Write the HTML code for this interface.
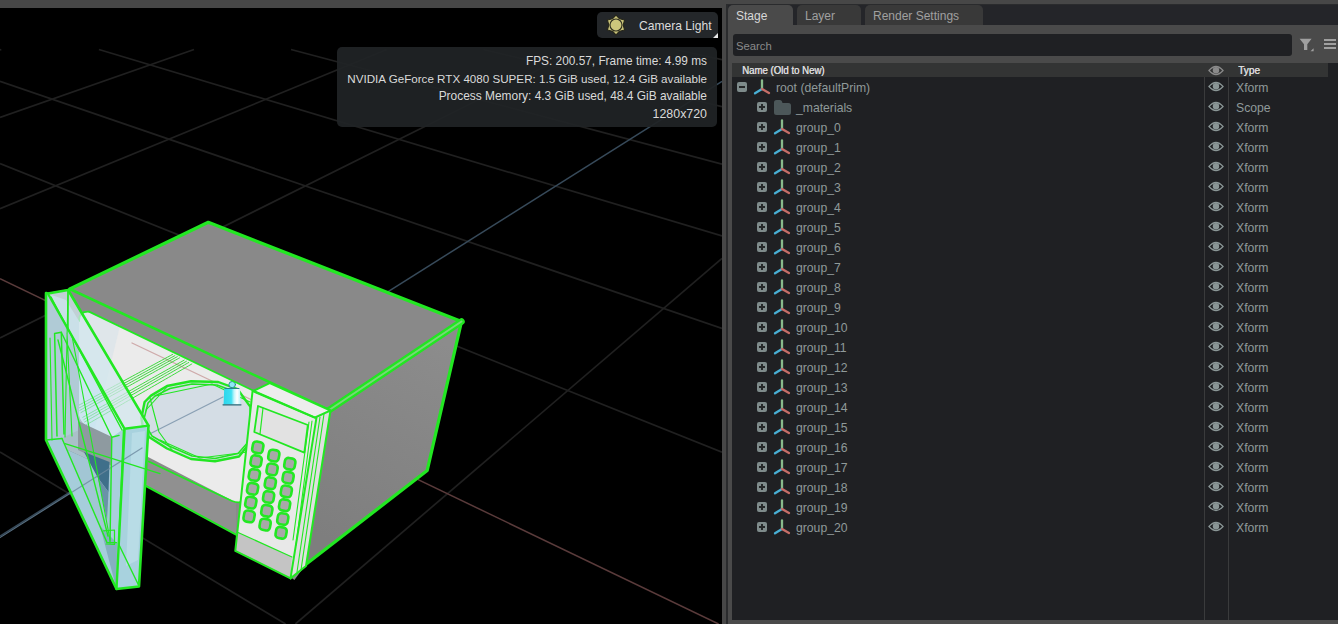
<!DOCTYPE html>
<html><head><meta charset="utf-8"><style>
*{margin:0;padding:0;box-sizing:border-box}
html,body{width:1338px;height:624px;overflow:hidden;background:#474747;font-family:"Liberation Sans",sans-serif;-webkit-font-smoothing:antialiased}
.abs{position:absolute}
#vp{position:absolute;left:0;top:8px;width:722px;height:616px;background:#000;overflow:hidden}
#vp svg.scene{position:absolute;left:0;top:-8px}
#cam{position:absolute;left:597px;top:4px;width:121px;height:26px;background:#24272a;border-radius:5px}
#cam .t{position:absolute;left:42px;top:6.5px;font-size:12.1px;color:#dcdcdc;white-space:nowrap}
#stats{position:absolute;left:337px;top:39px;width:380px;height:80px;background:rgba(32,35,38,0.93);border-radius:5px}
#stats div{position:absolute;right:10px;font-size:11.75px;color:#dadada;white-space:nowrap}
#rp{position:absolute;left:722px;top:0;width:616px;height:624px;background:#474747}
.tn,.tt{position:absolute;font-size:12.2px;color:#8f9a9a;white-space:nowrap;line-height:20px}
.ico,.eye{position:absolute}
.exp{position:absolute;width:10px;height:10px;background:#7e8b8b;border-radius:2px}
.exp .mh{position:absolute;left:2px;top:4px;width:6px;height:2px;background:#252829}
.exp .mv{position:absolute;left:4px;top:2px;width:2px;height:6px;background:#252829}
.tab{position:absolute;top:5px;height:20px;border-radius:5px 5px 0 0;font-size:12px;line-height:23px;white-space:nowrap}
</style></head><body>
<div id="vp">
<svg class="scene" width="722" height="624" viewBox="0 0 722 624">
<g><line x1="675.4" y1="49.5" x2="722.0" y2="59.6" stroke="#202020" stroke-width="1.7"/><line x1="483.2" y1="49.5" x2="722.0" y2="106.6" stroke="#202020" stroke-width="1.7"/><line x1="291.0" y1="49.5" x2="722.0" y2="164.1" stroke="#202020" stroke-width="1.7"/><line x1="98.9" y1="49.5" x2="722.0" y2="236.0" stroke="#202020" stroke-width="1.7"/><line x1="0.0" y1="81.4" x2="722.0" y2="328.5" stroke="#202020" stroke-width="1.7"/><line x1="0.0" y1="163.5" x2="722.0" y2="452.1" stroke="#202020" stroke-width="1.7"/><line x1="0.0" y1="452.1" x2="285.6" y2="624.0" stroke="#202020" stroke-width="1.7"/><line x1="1.3" y1="49.5" x2="0.0" y2="49.9" stroke="#202020" stroke-width="1.7"/><line x1="194.0" y1="49.5" x2="0.0" y2="117.5" stroke="#202020" stroke-width="1.7"/><line x1="386.8" y1="49.5" x2="0.0" y2="208.7" stroke="#202020" stroke-width="1.7"/><line x1="579.6" y1="49.5" x2="0.0" y2="338.0" stroke="#202020" stroke-width="1.7"/><line x1="722.0" y1="258.3" x2="295.4" y2="624.0" stroke="#202020" stroke-width="1.7"/></g>
<g><line x1="0.0" y1="278.7" x2="718.6" y2="624.0" stroke="#5a3b3b" stroke-width="1.5"/><line x1="722.0" y1="81.3" x2="0.0" y2="536.1" stroke="#374a5a" stroke-width="1.5"/></g>
<g id="mw" stroke-linejoin="round" stroke-linecap="round">
<!-- body -->
<polygon points="69.8,289 208.3,222.3 461.5,321.5 329.2,410" fill="#898989"/>
<defs><linearGradient id="rf" x1="440" y1="340" x2="330" y2="540" gradientUnits="userSpaceOnUse"><stop offset="0" stop-color="#8c8c8c"/><stop offset="1" stop-color="#7e7e7e"/></linearGradient></defs>
<polygon points="461.5,321.5 427.2,470.5 306,564.3 329.2,410" fill="url(#rf)"/>
<polygon points="69.8,289 329.2,410 306,564.3 294.4,580 236,534.6 146,486 46,440 46,293" fill="#8a8a8a"/>
<!-- opening -->
<path d="M79,321 Q79,311 89,311.6 L253,390.5 L248,500 Q246,503.5 236,502.6 L92,428 Q79,424 79,412 Z" fill="#ebebeb"/>
<path d="M79,321 Q79,311 89,311.6 L120,326 L95,428 Q79,424 79,412 Z" fill="#dfe6ea"/>
<!-- red axis through cavity -->
<line x1="132" y1="343" x2="252" y2="400" stroke="#c89a9a" stroke-width="1.3" opacity="0.8"/>
<!-- turntable -->
<path d="M141.4,418 L144.6,402 L151,395.6 L167,386 L191,381.2 L218.3,382 L237.6,389.2 L250.4,406.9 L252,440 L239,456.5 L215,461.3 L191,459 L167,448.5 L149.4,437.3 L143,427.7 Z" fill="#d4dde5"/>
<line x1="100" y1="459" x2="223" y2="397" stroke="#8aa0b4" stroke-width="1.3"/>
<g fill="none" stroke="#22e622" stroke-linejoin="round">
<path d="M141.4,418 L144.6,402 L151,395.6 L167,386 L191,381.2 L218.3,382 L237.6,389.2 L250.4,406.9 L252,440 L239,456.5 L215,461.3 L191,459 L167,448.5 L149.4,437.3 L143,427.7 Z" stroke-width="2.4"/>
<path d="M144.5,417 L148,403 L155,396 L170,388.5 L192,384 L217,385 L236,392" stroke-width="1.5"/>
<path d="M146,426 L152,436 L169,446 L192,456 L215,458.5 L238,453.5 L250,440" stroke-width="1.5"/>
<path d="M150,398 L159,432 L172,450 M146,410 L168,386 M155,396 L212,384 L250,402 M160,440 L200,458 L248,452" stroke-width="1.1"/>
</g>
<!-- rack lines -->
<g stroke="#2ad82a" stroke-width="0.9" fill="none" stroke-dasharray="2.5 0.8">
<path d="M78.0,405.7 L172.6,354.4 M79.0,408.0 L174.9,355.6 M79.9,410.3 L177.2,356.7 M80.9,412.6 L179.5,357.9 M82.8,417.3 L184.1,360.2 M83.8,419.6 L186.4,361.3 M84.7,421.9 L188.7,362.5 M86.0,425.0 L191.8,364.0"/>
</g>
<!-- light icon -->
<g>
<defs><linearGradient id="lg" x1="223.7" y1="0" x2="240.5" y2="0" gradientUnits="userSpaceOnUse"><stop offset="0" stop-color="#2cd6ec"/><stop offset="0.45" stop-color="#3ee0f2"/><stop offset="0.62" stop-color="#bff6fb"/><stop offset="0.8" stop-color="#ffffff"/><stop offset="1" stop-color="#b8f2f8"/></linearGradient></defs>
<ellipse cx="232.2" cy="384.6" rx="3.3" ry="3.1" fill="#8feaf4" stroke="#2a8a96" stroke-width="1"/>
<path d="M224.2,388.4 L240,388.4 L240.6,404.4 L223.6,404.4 Z" fill="url(#lg)"/>
<line x1="225" y1="388.5" x2="239" y2="388.5" stroke="#2a7f8c" stroke-width="1"/>
<line x1="223" y1="404.8" x2="241" y2="404.8" stroke="#2a6a78" stroke-width="1.2"/>
</g>
<!-- front lip under cavity -->
<polygon points="148.7,461.5 236,502.6 236,534.6 146,486" fill="#909090"/>
<!-- body green edges -->
<g fill="none" stroke="#22e822" stroke-width="2.2">
<path d="M69.8,289 L208.3,222.3 L461.5,321.5 L427.2,470.5 L306,564.3" stroke-width="3.3"/>
<path d="M69.8,289 L329.2,410" stroke-width="2.6"/>
<path d="M461.5,321.5 L329.2,410" stroke-width="6.5" stroke="#22e622"/>
<path d="M461.5,321.5 L329.2,410" stroke-width="2" stroke="#78d878"/>
<path d="M329.2,410 L306,564.3"/>
<path d="M89,311.6 L253,390.5" stroke-width="1.8"/>
<path d="M79,321 Q79,311 89,311.6" stroke-width="1.8"/>
<path d="M148.7,461.5 L232,501 Q240,504 246,500" stroke-width="1.8"/>
<path d="M146,486 L236,534.6" stroke-width="2"/>
<path d="M69,291 L80,310" stroke-width="1.5"/>
</g>
<!-- door -->
<polygon points="46,293 124.6,428.8 116.5,589 46,440" fill="#c0e4f4" opacity="0.6"/>
<polygon points="46,440 146,486 124,500 116.5,589" fill="#a2c6d4"/>
<polygon points="46,293 66,300 79,321 79,430 62,438 46,440" fill="#b0cbd6"/>
<polygon points="78,421 112,437 112,466 78,450" fill="#8e9aa0"/>
<polygon points="46,440 62,438.5 107,542.6 116.5,589" fill="#a6cddb"/>
<polygon points="84,452 109.5,462 108.5,492 98,478" fill="#3f6f8a"/>
<polygon points="98,478 108.5,492 107,520" fill="#6a93a8"/>
<polygon points="47.9,293.5 68.1,290 148.5,425.6 124.6,428.8" fill="#d3e7ee" opacity="0.75"/>
<polygon points="111.8,437.3 124,428.8 123,543 110,543" fill="#a9cfdc"/>
<polygon points="124.6,428.8 148.5,425.6 139,586.5 116.5,589" fill="#a8d2de"/>
<polygon points="132,433 145,431 138,560 126,566" fill="#b8dce6"/>
<polygon points="100,526 117,543 116.5,589" fill="#86afc0"/>
<line x1="0" y1="537.6" x2="142" y2="448" stroke="#6d8aa0" stroke-width="1.2" opacity="0.8"/>
<g fill="none" stroke="#22e822" stroke-width="2">
<path d="M47.9,293.5 L68.1,290 L148.5,425.6 L139,586.5 L116.5,589 L46,440 L46,293 Z" stroke-width="2.6"/>
<path d="M48.7,295 L124.6,428.8 L148.5,425.6 M124.6,428.8 L116.5,589" stroke-width="2.4"/>
<path d="M51,297 L122,430" stroke-width="1.4"/>
<path d="M46,440 L62,438.5 M54.6,333.5 L61.3,332.3 L64,434 M54.6,333.5 L57,436 M68,290 L68,330" stroke-width="1.5"/>
<path d="M62,438.5 L107,542.6 L116.5,542.6 M58,340 L108,536 M61.3,332.3 L111.8,437.3 L119,435.4" stroke-width="1.4"/>
<path d="M111.8,437.3 L110,543" stroke-width="1.4"/>
<path d="M50,338 L52,440 M67,333 L72,436 M72,336 L110,540 M68,290 L65,437" stroke-width="1.1"/>
<path d="M65,443.6 L160,473.6" stroke-width="1.3"/>
<path d="M123.5,430 L118.6,544 L139,586" stroke-width="1.4"/>
<path d="M103.6,530.8 L114.5,530 L114.5,544.4 L106,544" stroke-width="1.2"/>
</g>
<!-- control panel -->
<polygon points="252.9,391.2 269.7,383.2 330.5,410.5 314.6,417.6" fill="#ededed"/>
<polygon points="252.6,390.5 316.4,418.1 290.5,578.4 235.3,550.9" fill="#e8e8e8"/>
<polygon points="316.4,418.1 330.5,410.5 306,566 290.5,578.4" fill="#e0e0e0"/>
<polygon points="237,532 292,557 290.5,578.4 235.3,550.9" fill="#c4c4c4"/>
<polygon points="258,406 307.8,425 304.3,452.6 254.3,432" fill="#e2e2e2"/>
<g fill="none" stroke="#22e822" stroke-width="2">
<path d="M252.9,391.2 L269.7,383.2 L330.5,410.5 L314.6,417.6 Z"/>
<path d="M252.6,390.5 L316.4,418.1 L290.5,578.4 L235.3,550.9 Z"/>
<path d="M330.5,410.5 L306,566 L290.5,578.4"/>
<path d="M320,417 L297,572 M324,414 L301,570 M309,422 L293,540 M312,421 L296,545" stroke-width="1.1"/>
<path d="M258,406 L307.8,425 L304.3,452.6 L254.3,432 Z" stroke-width="1.8"/>
<path d="M263,408 L260,434" stroke-width="1.2"/>
<path d="M237,532 L292,557" stroke-width="1.2"/>
</g>
<g fill="#a8a8a8" stroke="#22e822" stroke-width="2.6">
<rect x="252.5" y="441.8" width="10.6" height="11.2" rx="3.5" transform="rotate(10 257.8 447.4)"/>
<rect x="268.5" y="450.0" width="10.6" height="11.2" rx="3.5" transform="rotate(10 273.8 455.6)"/>
<rect x="284.5" y="458.2" width="10.6" height="11.2" rx="3.5" transform="rotate(10 289.8 463.8)"/>
<rect x="250.8" y="455.6" width="10.6" height="11.2" rx="3.5" transform="rotate(10 256.1 461.2)"/>
<rect x="266.8" y="463.8" width="10.6" height="11.2" rx="3.5" transform="rotate(10 272.1 469.4)"/>
<rect x="282.8" y="472.0" width="10.6" height="11.2" rx="3.5" transform="rotate(10 288.1 477.6)"/>
<rect x="249.0" y="469.4" width="10.6" height="11.2" rx="3.5" transform="rotate(10 254.3 475.0)"/>
<rect x="265.0" y="477.6" width="10.6" height="11.2" rx="3.5" transform="rotate(10 270.3 483.2)"/>
<rect x="281.0" y="485.8" width="10.6" height="11.2" rx="3.5" transform="rotate(10 286.3 491.4)"/>
<rect x="247.3" y="483.2" width="10.6" height="11.2" rx="3.5" transform="rotate(10 252.6 488.8)"/>
<rect x="263.3" y="491.4" width="10.6" height="11.2" rx="3.5" transform="rotate(10 268.6 497.0)"/>
<rect x="279.3" y="499.6" width="10.6" height="11.2" rx="3.5" transform="rotate(10 284.6 505.2)"/>
<rect x="245.5" y="497.0" width="10.6" height="11.2" rx="3.5" transform="rotate(10 250.8 502.6)"/>
<rect x="261.5" y="505.2" width="10.6" height="11.2" rx="3.5" transform="rotate(10 266.8 510.8)"/>
<rect x="277.5" y="513.4" width="10.6" height="11.2" rx="3.5" transform="rotate(10 282.8 519.0)"/>
<rect x="243.8" y="510.8" width="10.6" height="11.2" rx="3.5" transform="rotate(10 249.1 516.4)"/>
<rect x="259.8" y="519.0" width="10.6" height="11.2" rx="3.5" transform="rotate(10 265.1 524.6)"/>
<rect x="275.8" y="527.2" width="10.6" height="11.2" rx="3.5" transform="rotate(10 281.1 532.8)"/>
</g>
</g>

</svg>
<div id="cam"><svg class="abs" style="left:7.5px;top:1.5px" width="22" height="22" viewBox="-11 -11 22 22">
<path d="M0.00 -10.00 L3.60 -6.24 L8.66 -5.00 L7.20 0.00 L8.66 5.00 L3.60 6.24 L0.00 10.00 L-3.60 6.24 L-8.66 5.00 L-7.20 0.00 L-8.66 -5.00 L-3.60 -6.24 Z" fill="#c9c37a" stroke="#26261a" stroke-width="1.1" stroke-linejoin="round"/>
<circle r="6.0" fill="#cdc77c" stroke="#2f2f20" stroke-width="1.1"/></svg>
<div class="t">Camera Light</div>
<svg class="abs" style="left:116px;top:21px" width="5" height="5"><path d="M5 0 L5 5 L0 5 Z" fill="#e8e8e8"/></svg></div>
<div id="stats">
<div style="top:7px;font-size:11.85px">FPS: 200.57, Frame time: 4.99 ms</div>
<div style="top:25px;font-size:11.64px">NVIDIA GeForce RTX 4080 SUPER: 1.5 GiB used, 12.4 GiB available</div>
<div style="top:42px;font-size:11.93px">Process Memory: 4.3 GiB used, 48.4 GiB available</div>
<div style="top:59.5px;font-size:12.4px">1280x720</div>
</div>
</div>
<div id="rp">
 <div class="abs" style="left:4px;top:4px;width:612px;height:620px;background:#2a2b2d"></div>
 <div class="abs" style="left:6px;top:5px;width:610px;height:619px;background:#4a4a4a"></div>
 <div class="abs" style="left:6px;top:5px;width:610px;height:20px;background:#242529"></div>
 <div class="tab" style="left:6px;width:65px;background:#4a4a4a;color:#d8d8d8;padding-left:8px">Stage</div>
 <div class="tab" style="left:75px;width:64px;background:#393939;color:#a0a0a0;padding-left:8px">Layer</div>
 <div class="tab" style="left:143px;width:118px;background:#393939;color:#a0a0a0;padding-left:8px">Render Settings</div>
</div>
<div class="abs" style="left:733px;top:34px;width:559px;height:22px;background:#1f2023;border-radius:3px"></div>
<div class="abs" style="left:736px;top:35px;font-size:11.3px;line-height:23px;color:#8a8a8a">Search</div>
<svg class="abs" style="left:1299px;top:38px" width="16" height="14" viewBox="0 0 16 14"><path d="M0.6 0.8 L12.6 0.8 L8.3 6.2 L8.3 12 L5 12 L5 6.2 Z" fill="#a0a0a0"/><path d="M14.6 10.2 L14.6 13.3 L11.5 13.3 Z" fill="#a0a0a0"/></svg>
<div class="abs" style="left:1324px;top:39px;width:12px;height:2px;background:#a0a0a0"></div>
<div class="abs" style="left:1324px;top:43px;width:12px;height:2px;background:#a0a0a0"></div>
<div class="abs" style="left:1324px;top:47px;width:12px;height:2px;background:#a0a0a0"></div>
<div class="abs" style="left:732px;top:63px;width:606px;height:557px;background:#1f2023"></div>
<div class="abs" style="left:732px;top:63px;width:596px;height:14px;background:#333434"></div>
<div class="abs" style="left:742px;top:63.2px;font-size:10.3px;line-height:15px;color:#dadada;white-space:nowrap;transform:scaleX(0.935);transform-origin:0 0;text-shadow:0.45px 0 0 #dadada">Name (Old to New)</div>
<div class="abs" style="left:1238px;top:63.2px;font-size:10.3px;line-height:15px;color:#dadada;transform:scaleX(0.98);transform-origin:0 0;text-shadow:0.45px 0 0 #dadada">Type</div>
<svg class="abs" style="left:1208px;top:65px" width="16" height="11" viewBox="0 0 16 11"><path d="M1 5.5 Q8 -2.5 15 5.5 Q8 13.5 1 5.5 Z" fill="none" stroke="#8a8a8a" stroke-width="1.3"/><circle cx="8" cy="5.3" r="3.2" fill="#8a8a8a"/></svg>
<div class="abs" style="left:1204px;top:77px;width:1px;height:543px;background:#3a3b3c"></div>
<div class="abs" style="left:1228px;top:77px;width:1px;height:543px;background:#3a3b3c"></div>
<div class="exp" style="left:737px;top:82px"><div class="mh"></div></div><svg class="ico" style="left:752px;top:77.5px" width="20" height="18" viewBox="0 0 20 18"><path d="M10 11 L10 2.5" stroke="#88bb8c" stroke-width="2.3" stroke-linecap="round"/><path d="M10 11 L3 15.3" stroke="#48b0d6" stroke-width="2.3" stroke-linecap="round"/><path d="M10 11 L17 15" stroke="#c76e68" stroke-width="2.3" stroke-linecap="round"/></svg><div class="tn" style="left:776px;top:77.7px">root (defaultPrim)</div><svg class="eye" style="left:1208px;top:81px" width="16" height="11" viewBox="0 0 16 11"><path d="M1 5.5 Q8 -2.5 15 5.5 Q8 13.5 1 5.5 Z" fill="none" stroke="#8a9696" stroke-width="1.3"/><circle cx="8" cy="5.3" r="3.2" fill="#8a9696"/></svg><div class="tt" style="left:1236px;top:77.7px">Xform</div><div class="exp" style="left:757px;top:102px"><div class="mh"></div><div class="mv"></div></div><svg class="ico" style="left:774px;top:100px" width="17" height="15" viewBox="0 0 17 15"><path d="M0 2.5 Q0 0 2.5 0 L6 0 Q7.5 0 8 1.5 L8.5 3 L14.5 3 Q17 3 17 5.5 L17 12.5 Q17 15 14.5 15 L2.5 15 Q0 15 0 12.5 Z" fill="#4c5759"/></svg><div class="tn" style="left:796px;top:97.7px">_materials</div><svg class="eye" style="left:1208px;top:101px" width="16" height="11" viewBox="0 0 16 11"><path d="M1 5.5 Q8 -2.5 15 5.5 Q8 13.5 1 5.5 Z" fill="none" stroke="#8a9696" stroke-width="1.3"/><circle cx="8" cy="5.3" r="3.2" fill="#8a9696"/></svg><div class="tt" style="left:1236px;top:97.7px">Scope</div><div class="exp" style="left:757px;top:122px"><div class="mh"></div><div class="mv"></div></div><svg class="ico" style="left:772px;top:117.5px" width="20" height="18" viewBox="0 0 20 18"><path d="M10 11 L10 2.5" stroke="#88bb8c" stroke-width="2.3" stroke-linecap="round"/><path d="M10 11 L3 15.3" stroke="#48b0d6" stroke-width="2.3" stroke-linecap="round"/><path d="M10 11 L17 15" stroke="#c76e68" stroke-width="2.3" stroke-linecap="round"/></svg><div class="tn" style="left:796px;top:117.7px">group_0</div><svg class="eye" style="left:1208px;top:121px" width="16" height="11" viewBox="0 0 16 11"><path d="M1 5.5 Q8 -2.5 15 5.5 Q8 13.5 1 5.5 Z" fill="none" stroke="#8a9696" stroke-width="1.3"/><circle cx="8" cy="5.3" r="3.2" fill="#8a9696"/></svg><div class="tt" style="left:1236px;top:117.7px">Xform</div><div class="exp" style="left:757px;top:142px"><div class="mh"></div><div class="mv"></div></div><svg class="ico" style="left:772px;top:137.5px" width="20" height="18" viewBox="0 0 20 18"><path d="M10 11 L10 2.5" stroke="#88bb8c" stroke-width="2.3" stroke-linecap="round"/><path d="M10 11 L3 15.3" stroke="#48b0d6" stroke-width="2.3" stroke-linecap="round"/><path d="M10 11 L17 15" stroke="#c76e68" stroke-width="2.3" stroke-linecap="round"/></svg><div class="tn" style="left:796px;top:137.7px">group_1</div><svg class="eye" style="left:1208px;top:141px" width="16" height="11" viewBox="0 0 16 11"><path d="M1 5.5 Q8 -2.5 15 5.5 Q8 13.5 1 5.5 Z" fill="none" stroke="#8a9696" stroke-width="1.3"/><circle cx="8" cy="5.3" r="3.2" fill="#8a9696"/></svg><div class="tt" style="left:1236px;top:137.7px">Xform</div><div class="exp" style="left:757px;top:162px"><div class="mh"></div><div class="mv"></div></div><svg class="ico" style="left:772px;top:157.5px" width="20" height="18" viewBox="0 0 20 18"><path d="M10 11 L10 2.5" stroke="#88bb8c" stroke-width="2.3" stroke-linecap="round"/><path d="M10 11 L3 15.3" stroke="#48b0d6" stroke-width="2.3" stroke-linecap="round"/><path d="M10 11 L17 15" stroke="#c76e68" stroke-width="2.3" stroke-linecap="round"/></svg><div class="tn" style="left:796px;top:157.7px">group_2</div><svg class="eye" style="left:1208px;top:161px" width="16" height="11" viewBox="0 0 16 11"><path d="M1 5.5 Q8 -2.5 15 5.5 Q8 13.5 1 5.5 Z" fill="none" stroke="#8a9696" stroke-width="1.3"/><circle cx="8" cy="5.3" r="3.2" fill="#8a9696"/></svg><div class="tt" style="left:1236px;top:157.7px">Xform</div><div class="exp" style="left:757px;top:182px"><div class="mh"></div><div class="mv"></div></div><svg class="ico" style="left:772px;top:177.5px" width="20" height="18" viewBox="0 0 20 18"><path d="M10 11 L10 2.5" stroke="#88bb8c" stroke-width="2.3" stroke-linecap="round"/><path d="M10 11 L3 15.3" stroke="#48b0d6" stroke-width="2.3" stroke-linecap="round"/><path d="M10 11 L17 15" stroke="#c76e68" stroke-width="2.3" stroke-linecap="round"/></svg><div class="tn" style="left:796px;top:177.7px">group_3</div><svg class="eye" style="left:1208px;top:181px" width="16" height="11" viewBox="0 0 16 11"><path d="M1 5.5 Q8 -2.5 15 5.5 Q8 13.5 1 5.5 Z" fill="none" stroke="#8a9696" stroke-width="1.3"/><circle cx="8" cy="5.3" r="3.2" fill="#8a9696"/></svg><div class="tt" style="left:1236px;top:177.7px">Xform</div><div class="exp" style="left:757px;top:202px"><div class="mh"></div><div class="mv"></div></div><svg class="ico" style="left:772px;top:197.5px" width="20" height="18" viewBox="0 0 20 18"><path d="M10 11 L10 2.5" stroke="#88bb8c" stroke-width="2.3" stroke-linecap="round"/><path d="M10 11 L3 15.3" stroke="#48b0d6" stroke-width="2.3" stroke-linecap="round"/><path d="M10 11 L17 15" stroke="#c76e68" stroke-width="2.3" stroke-linecap="round"/></svg><div class="tn" style="left:796px;top:197.7px">group_4</div><svg class="eye" style="left:1208px;top:201px" width="16" height="11" viewBox="0 0 16 11"><path d="M1 5.5 Q8 -2.5 15 5.5 Q8 13.5 1 5.5 Z" fill="none" stroke="#8a9696" stroke-width="1.3"/><circle cx="8" cy="5.3" r="3.2" fill="#8a9696"/></svg><div class="tt" style="left:1236px;top:197.7px">Xform</div><div class="exp" style="left:757px;top:222px"><div class="mh"></div><div class="mv"></div></div><svg class="ico" style="left:772px;top:217.5px" width="20" height="18" viewBox="0 0 20 18"><path d="M10 11 L10 2.5" stroke="#88bb8c" stroke-width="2.3" stroke-linecap="round"/><path d="M10 11 L3 15.3" stroke="#48b0d6" stroke-width="2.3" stroke-linecap="round"/><path d="M10 11 L17 15" stroke="#c76e68" stroke-width="2.3" stroke-linecap="round"/></svg><div class="tn" style="left:796px;top:217.7px">group_5</div><svg class="eye" style="left:1208px;top:221px" width="16" height="11" viewBox="0 0 16 11"><path d="M1 5.5 Q8 -2.5 15 5.5 Q8 13.5 1 5.5 Z" fill="none" stroke="#8a9696" stroke-width="1.3"/><circle cx="8" cy="5.3" r="3.2" fill="#8a9696"/></svg><div class="tt" style="left:1236px;top:217.7px">Xform</div><div class="exp" style="left:757px;top:242px"><div class="mh"></div><div class="mv"></div></div><svg class="ico" style="left:772px;top:237.5px" width="20" height="18" viewBox="0 0 20 18"><path d="M10 11 L10 2.5" stroke="#88bb8c" stroke-width="2.3" stroke-linecap="round"/><path d="M10 11 L3 15.3" stroke="#48b0d6" stroke-width="2.3" stroke-linecap="round"/><path d="M10 11 L17 15" stroke="#c76e68" stroke-width="2.3" stroke-linecap="round"/></svg><div class="tn" style="left:796px;top:237.7px">group_6</div><svg class="eye" style="left:1208px;top:241px" width="16" height="11" viewBox="0 0 16 11"><path d="M1 5.5 Q8 -2.5 15 5.5 Q8 13.5 1 5.5 Z" fill="none" stroke="#8a9696" stroke-width="1.3"/><circle cx="8" cy="5.3" r="3.2" fill="#8a9696"/></svg><div class="tt" style="left:1236px;top:237.7px">Xform</div><div class="exp" style="left:757px;top:262px"><div class="mh"></div><div class="mv"></div></div><svg class="ico" style="left:772px;top:257.5px" width="20" height="18" viewBox="0 0 20 18"><path d="M10 11 L10 2.5" stroke="#88bb8c" stroke-width="2.3" stroke-linecap="round"/><path d="M10 11 L3 15.3" stroke="#48b0d6" stroke-width="2.3" stroke-linecap="round"/><path d="M10 11 L17 15" stroke="#c76e68" stroke-width="2.3" stroke-linecap="round"/></svg><div class="tn" style="left:796px;top:257.7px">group_7</div><svg class="eye" style="left:1208px;top:261px" width="16" height="11" viewBox="0 0 16 11"><path d="M1 5.5 Q8 -2.5 15 5.5 Q8 13.5 1 5.5 Z" fill="none" stroke="#8a9696" stroke-width="1.3"/><circle cx="8" cy="5.3" r="3.2" fill="#8a9696"/></svg><div class="tt" style="left:1236px;top:257.7px">Xform</div><div class="exp" style="left:757px;top:282px"><div class="mh"></div><div class="mv"></div></div><svg class="ico" style="left:772px;top:277.5px" width="20" height="18" viewBox="0 0 20 18"><path d="M10 11 L10 2.5" stroke="#88bb8c" stroke-width="2.3" stroke-linecap="round"/><path d="M10 11 L3 15.3" stroke="#48b0d6" stroke-width="2.3" stroke-linecap="round"/><path d="M10 11 L17 15" stroke="#c76e68" stroke-width="2.3" stroke-linecap="round"/></svg><div class="tn" style="left:796px;top:277.7px">group_8</div><svg class="eye" style="left:1208px;top:281px" width="16" height="11" viewBox="0 0 16 11"><path d="M1 5.5 Q8 -2.5 15 5.5 Q8 13.5 1 5.5 Z" fill="none" stroke="#8a9696" stroke-width="1.3"/><circle cx="8" cy="5.3" r="3.2" fill="#8a9696"/></svg><div class="tt" style="left:1236px;top:277.7px">Xform</div><div class="exp" style="left:757px;top:302px"><div class="mh"></div><div class="mv"></div></div><svg class="ico" style="left:772px;top:297.5px" width="20" height="18" viewBox="0 0 20 18"><path d="M10 11 L10 2.5" stroke="#88bb8c" stroke-width="2.3" stroke-linecap="round"/><path d="M10 11 L3 15.3" stroke="#48b0d6" stroke-width="2.3" stroke-linecap="round"/><path d="M10 11 L17 15" stroke="#c76e68" stroke-width="2.3" stroke-linecap="round"/></svg><div class="tn" style="left:796px;top:297.7px">group_9</div><svg class="eye" style="left:1208px;top:301px" width="16" height="11" viewBox="0 0 16 11"><path d="M1 5.5 Q8 -2.5 15 5.5 Q8 13.5 1 5.5 Z" fill="none" stroke="#8a9696" stroke-width="1.3"/><circle cx="8" cy="5.3" r="3.2" fill="#8a9696"/></svg><div class="tt" style="left:1236px;top:297.7px">Xform</div><div class="exp" style="left:757px;top:322px"><div class="mh"></div><div class="mv"></div></div><svg class="ico" style="left:772px;top:317.5px" width="20" height="18" viewBox="0 0 20 18"><path d="M10 11 L10 2.5" stroke="#88bb8c" stroke-width="2.3" stroke-linecap="round"/><path d="M10 11 L3 15.3" stroke="#48b0d6" stroke-width="2.3" stroke-linecap="round"/><path d="M10 11 L17 15" stroke="#c76e68" stroke-width="2.3" stroke-linecap="round"/></svg><div class="tn" style="left:796px;top:317.7px">group_10</div><svg class="eye" style="left:1208px;top:321px" width="16" height="11" viewBox="0 0 16 11"><path d="M1 5.5 Q8 -2.5 15 5.5 Q8 13.5 1 5.5 Z" fill="none" stroke="#8a9696" stroke-width="1.3"/><circle cx="8" cy="5.3" r="3.2" fill="#8a9696"/></svg><div class="tt" style="left:1236px;top:317.7px">Xform</div><div class="exp" style="left:757px;top:342px"><div class="mh"></div><div class="mv"></div></div><svg class="ico" style="left:772px;top:337.5px" width="20" height="18" viewBox="0 0 20 18"><path d="M10 11 L10 2.5" stroke="#88bb8c" stroke-width="2.3" stroke-linecap="round"/><path d="M10 11 L3 15.3" stroke="#48b0d6" stroke-width="2.3" stroke-linecap="round"/><path d="M10 11 L17 15" stroke="#c76e68" stroke-width="2.3" stroke-linecap="round"/></svg><div class="tn" style="left:796px;top:337.7px">group_11</div><svg class="eye" style="left:1208px;top:341px" width="16" height="11" viewBox="0 0 16 11"><path d="M1 5.5 Q8 -2.5 15 5.5 Q8 13.5 1 5.5 Z" fill="none" stroke="#8a9696" stroke-width="1.3"/><circle cx="8" cy="5.3" r="3.2" fill="#8a9696"/></svg><div class="tt" style="left:1236px;top:337.7px">Xform</div><div class="exp" style="left:757px;top:362px"><div class="mh"></div><div class="mv"></div></div><svg class="ico" style="left:772px;top:357.5px" width="20" height="18" viewBox="0 0 20 18"><path d="M10 11 L10 2.5" stroke="#88bb8c" stroke-width="2.3" stroke-linecap="round"/><path d="M10 11 L3 15.3" stroke="#48b0d6" stroke-width="2.3" stroke-linecap="round"/><path d="M10 11 L17 15" stroke="#c76e68" stroke-width="2.3" stroke-linecap="round"/></svg><div class="tn" style="left:796px;top:357.7px">group_12</div><svg class="eye" style="left:1208px;top:361px" width="16" height="11" viewBox="0 0 16 11"><path d="M1 5.5 Q8 -2.5 15 5.5 Q8 13.5 1 5.5 Z" fill="none" stroke="#8a9696" stroke-width="1.3"/><circle cx="8" cy="5.3" r="3.2" fill="#8a9696"/></svg><div class="tt" style="left:1236px;top:357.7px">Xform</div><div class="exp" style="left:757px;top:382px"><div class="mh"></div><div class="mv"></div></div><svg class="ico" style="left:772px;top:377.5px" width="20" height="18" viewBox="0 0 20 18"><path d="M10 11 L10 2.5" stroke="#88bb8c" stroke-width="2.3" stroke-linecap="round"/><path d="M10 11 L3 15.3" stroke="#48b0d6" stroke-width="2.3" stroke-linecap="round"/><path d="M10 11 L17 15" stroke="#c76e68" stroke-width="2.3" stroke-linecap="round"/></svg><div class="tn" style="left:796px;top:377.7px">group_13</div><svg class="eye" style="left:1208px;top:381px" width="16" height="11" viewBox="0 0 16 11"><path d="M1 5.5 Q8 -2.5 15 5.5 Q8 13.5 1 5.5 Z" fill="none" stroke="#8a9696" stroke-width="1.3"/><circle cx="8" cy="5.3" r="3.2" fill="#8a9696"/></svg><div class="tt" style="left:1236px;top:377.7px">Xform</div><div class="exp" style="left:757px;top:402px"><div class="mh"></div><div class="mv"></div></div><svg class="ico" style="left:772px;top:397.5px" width="20" height="18" viewBox="0 0 20 18"><path d="M10 11 L10 2.5" stroke="#88bb8c" stroke-width="2.3" stroke-linecap="round"/><path d="M10 11 L3 15.3" stroke="#48b0d6" stroke-width="2.3" stroke-linecap="round"/><path d="M10 11 L17 15" stroke="#c76e68" stroke-width="2.3" stroke-linecap="round"/></svg><div class="tn" style="left:796px;top:397.7px">group_14</div><svg class="eye" style="left:1208px;top:401px" width="16" height="11" viewBox="0 0 16 11"><path d="M1 5.5 Q8 -2.5 15 5.5 Q8 13.5 1 5.5 Z" fill="none" stroke="#8a9696" stroke-width="1.3"/><circle cx="8" cy="5.3" r="3.2" fill="#8a9696"/></svg><div class="tt" style="left:1236px;top:397.7px">Xform</div><div class="exp" style="left:757px;top:422px"><div class="mh"></div><div class="mv"></div></div><svg class="ico" style="left:772px;top:417.5px" width="20" height="18" viewBox="0 0 20 18"><path d="M10 11 L10 2.5" stroke="#88bb8c" stroke-width="2.3" stroke-linecap="round"/><path d="M10 11 L3 15.3" stroke="#48b0d6" stroke-width="2.3" stroke-linecap="round"/><path d="M10 11 L17 15" stroke="#c76e68" stroke-width="2.3" stroke-linecap="round"/></svg><div class="tn" style="left:796px;top:417.7px">group_15</div><svg class="eye" style="left:1208px;top:421px" width="16" height="11" viewBox="0 0 16 11"><path d="M1 5.5 Q8 -2.5 15 5.5 Q8 13.5 1 5.5 Z" fill="none" stroke="#8a9696" stroke-width="1.3"/><circle cx="8" cy="5.3" r="3.2" fill="#8a9696"/></svg><div class="tt" style="left:1236px;top:417.7px">Xform</div><div class="exp" style="left:757px;top:442px"><div class="mh"></div><div class="mv"></div></div><svg class="ico" style="left:772px;top:437.5px" width="20" height="18" viewBox="0 0 20 18"><path d="M10 11 L10 2.5" stroke="#88bb8c" stroke-width="2.3" stroke-linecap="round"/><path d="M10 11 L3 15.3" stroke="#48b0d6" stroke-width="2.3" stroke-linecap="round"/><path d="M10 11 L17 15" stroke="#c76e68" stroke-width="2.3" stroke-linecap="round"/></svg><div class="tn" style="left:796px;top:437.7px">group_16</div><svg class="eye" style="left:1208px;top:441px" width="16" height="11" viewBox="0 0 16 11"><path d="M1 5.5 Q8 -2.5 15 5.5 Q8 13.5 1 5.5 Z" fill="none" stroke="#8a9696" stroke-width="1.3"/><circle cx="8" cy="5.3" r="3.2" fill="#8a9696"/></svg><div class="tt" style="left:1236px;top:437.7px">Xform</div><div class="exp" style="left:757px;top:462px"><div class="mh"></div><div class="mv"></div></div><svg class="ico" style="left:772px;top:457.5px" width="20" height="18" viewBox="0 0 20 18"><path d="M10 11 L10 2.5" stroke="#88bb8c" stroke-width="2.3" stroke-linecap="round"/><path d="M10 11 L3 15.3" stroke="#48b0d6" stroke-width="2.3" stroke-linecap="round"/><path d="M10 11 L17 15" stroke="#c76e68" stroke-width="2.3" stroke-linecap="round"/></svg><div class="tn" style="left:796px;top:457.7px">group_17</div><svg class="eye" style="left:1208px;top:461px" width="16" height="11" viewBox="0 0 16 11"><path d="M1 5.5 Q8 -2.5 15 5.5 Q8 13.5 1 5.5 Z" fill="none" stroke="#8a9696" stroke-width="1.3"/><circle cx="8" cy="5.3" r="3.2" fill="#8a9696"/></svg><div class="tt" style="left:1236px;top:457.7px">Xform</div><div class="exp" style="left:757px;top:482px"><div class="mh"></div><div class="mv"></div></div><svg class="ico" style="left:772px;top:477.5px" width="20" height="18" viewBox="0 0 20 18"><path d="M10 11 L10 2.5" stroke="#88bb8c" stroke-width="2.3" stroke-linecap="round"/><path d="M10 11 L3 15.3" stroke="#48b0d6" stroke-width="2.3" stroke-linecap="round"/><path d="M10 11 L17 15" stroke="#c76e68" stroke-width="2.3" stroke-linecap="round"/></svg><div class="tn" style="left:796px;top:477.7px">group_18</div><svg class="eye" style="left:1208px;top:481px" width="16" height="11" viewBox="0 0 16 11"><path d="M1 5.5 Q8 -2.5 15 5.5 Q8 13.5 1 5.5 Z" fill="none" stroke="#8a9696" stroke-width="1.3"/><circle cx="8" cy="5.3" r="3.2" fill="#8a9696"/></svg><div class="tt" style="left:1236px;top:477.7px">Xform</div><div class="exp" style="left:757px;top:502px"><div class="mh"></div><div class="mv"></div></div><svg class="ico" style="left:772px;top:497.5px" width="20" height="18" viewBox="0 0 20 18"><path d="M10 11 L10 2.5" stroke="#88bb8c" stroke-width="2.3" stroke-linecap="round"/><path d="M10 11 L3 15.3" stroke="#48b0d6" stroke-width="2.3" stroke-linecap="round"/><path d="M10 11 L17 15" stroke="#c76e68" stroke-width="2.3" stroke-linecap="round"/></svg><div class="tn" style="left:796px;top:497.7px">group_19</div><svg class="eye" style="left:1208px;top:501px" width="16" height="11" viewBox="0 0 16 11"><path d="M1 5.5 Q8 -2.5 15 5.5 Q8 13.5 1 5.5 Z" fill="none" stroke="#8a9696" stroke-width="1.3"/><circle cx="8" cy="5.3" r="3.2" fill="#8a9696"/></svg><div class="tt" style="left:1236px;top:497.7px">Xform</div><div class="exp" style="left:757px;top:522px"><div class="mh"></div><div class="mv"></div></div><svg class="ico" style="left:772px;top:517.5px" width="20" height="18" viewBox="0 0 20 18"><path d="M10 11 L10 2.5" stroke="#88bb8c" stroke-width="2.3" stroke-linecap="round"/><path d="M10 11 L3 15.3" stroke="#48b0d6" stroke-width="2.3" stroke-linecap="round"/><path d="M10 11 L17 15" stroke="#c76e68" stroke-width="2.3" stroke-linecap="round"/></svg><div class="tn" style="left:796px;top:517.7px">group_20</div><svg class="eye" style="left:1208px;top:521px" width="16" height="11" viewBox="0 0 16 11"><path d="M1 5.5 Q8 -2.5 15 5.5 Q8 13.5 1 5.5 Z" fill="none" stroke="#8a9696" stroke-width="1.3"/><circle cx="8" cy="5.3" r="3.2" fill="#8a9696"/></svg><div class="tt" style="left:1236px;top:517.7px">Xform</div>
</body></html>
